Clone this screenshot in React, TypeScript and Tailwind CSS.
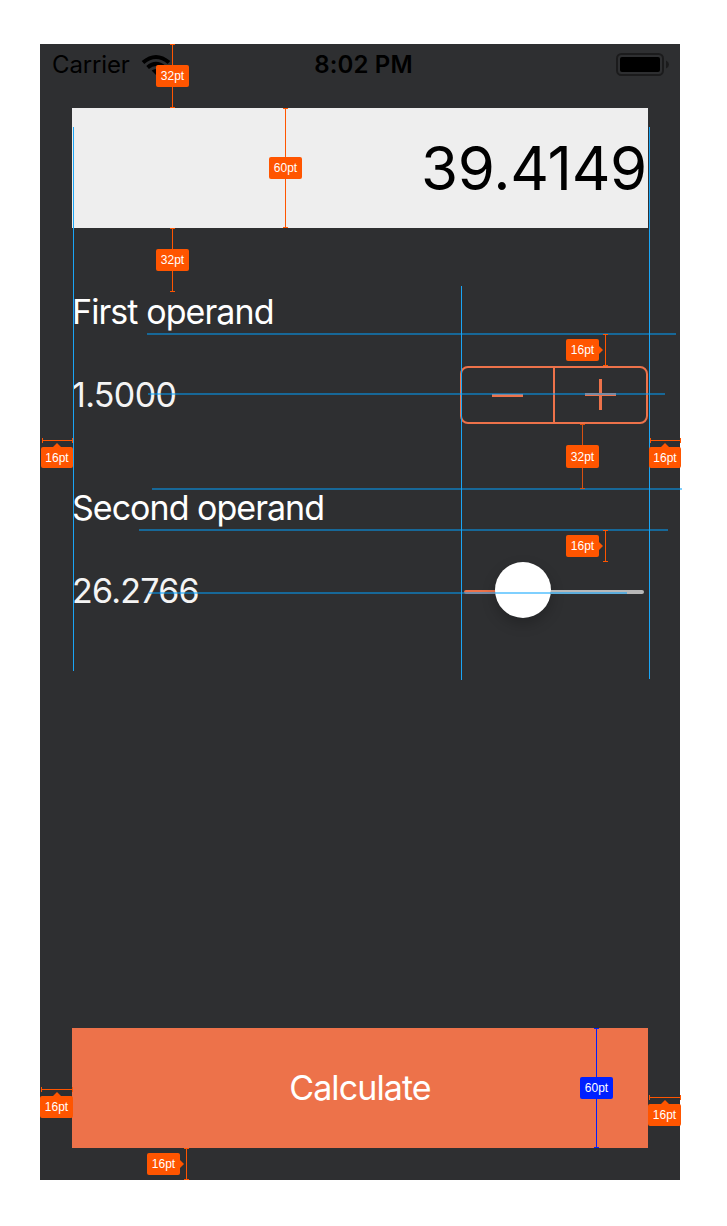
type Arrow = "right" | "up";

function Badge({ text, place, color, arrow }: { text: string; place: string; color: string; arrow?: Arrow }) {
  return (
    <div className={`absolute flex items-center justify-center rounded-[2px] font-['Liberation_Sans',sans-serif] text-[12px] leading-none text-white ${color} ${place}`}>
      {arrow === "right" && (
        <svg className="absolute left-full top-1/2 -translate-y-1/2" width="4" height="8" viewBox="0 0 4 8">
          <path d="M0 0L4 4L0 8Z" fill="#ff5500" />
        </svg>
      )}
      {arrow === "up" && (
        <svg className="absolute bottom-full left-1/2 -translate-x-1/2" width="8" height="4" viewBox="0 0 8 4">
          <path d="M0 4L4 0L8 4Z" fill="#ff5500" />
        </svg>
      )}
      <span>{text}</span>
    </div>
  );
}

function VerticalMeasure({ place, color }: { place: string; color: string }) {
  return (
    <div className={`absolute flex w-[5px] flex-col items-center ${place}`}>
      <div className={`h-px w-full ${color}`} />
      <div className={`w-px flex-1 ${color}`} />
      <div className={`h-px w-full ${color}`} />
    </div>
  );
}

function HorizontalMeasure({ place }: { place: string }) {
  return (
    <div className={`absolute flex h-[5px] items-center ${place}`}>
      <div className="h-full w-px bg-[#ff5500]" />
      <div className="h-px flex-1 bg-[#ff5500]" />
      <div className="h-full w-px bg-[#ff5500]" />
    </div>
  );
}

const guides = [
  "left-[147px] top-[333px] w-[529px]",
  "left-[148px] top-[393px] w-[517px]",
  "left-[152px] top-[488px] w-[530px]",
  "left-[139px] top-[529px] w-[529px]",
  "left-[149px] top-[592px] w-[478px]",
];

const orange = "bg-[#ff5500]";
const blue = "bg-[#0020ff]";

function Annotations() {
  return (
    <div className="pointer-events-none absolute inset-0">
      {guides.map((g) => (
        <div key={g} className={`absolute h-[2px] bg-[#00a2ff]/50 ${g}`} />
      ))}
      <div className="absolute left-[73px] top-[127px] h-[544px] w-px bg-[#1aa5f5]" />
      <div className="absolute left-[461px] top-[286px] h-[394px] w-px bg-[#1aa5f5]" />
      <div className="absolute left-[649px] top-[127px] h-[552px] w-px bg-[#1aa5f5]" />

      <VerticalMeasure place="left-[170px] top-[44px] h-[64px]" color={orange} />
      <VerticalMeasure place="left-[283px] top-[108px] h-[120px]" color={orange} />
      <VerticalMeasure place="left-[170px] top-[228px] h-[64px]" color={orange} />
      <VerticalMeasure place="left-[603px] top-[334px] h-[32px]" color={orange} />
      <VerticalMeasure place="left-[580px] top-[424px] h-[65px]" color="bg-[#d85010]" />
      <VerticalMeasure place="left-[603px] top-[530px] h-[32px]" color={orange} />
      <VerticalMeasure place="left-[184px] top-[1148px] h-[32px]" color={orange} />
      <VerticalMeasure place="left-[594px] top-[1028px] h-[120px]" color={blue} />
      <HorizontalMeasure place="left-[42px] top-[438px] w-[31px]" />
      <HorizontalMeasure place="left-[650px] top-[438px] w-[31px]" />
      <HorizontalMeasure place="left-[41px] top-[1087px] w-[32px]" />
      <HorizontalMeasure place="left-[649px] top-[1095px] w-[32px]" />

      <Badge text="32pt" color={orange} place="left-[156px] top-[65px] h-[22px] w-[33px]" />
      <Badge text="60pt" color={orange} place="left-[269px] top-[157px] h-[22px] w-[33px]" />
      <Badge text="32pt" color={orange} place="left-[156px] top-[249px] h-[22px] w-[33px]" />
      <Badge text="16pt" color={orange} place="left-[566px] top-[339px] h-[22px] w-[33px]" arrow="right" />
      <Badge text="32pt" color={orange} place="left-[566px] top-[445px] h-[23px] w-[33px]" />
      <Badge text="16pt" color={orange} place="left-[566px] top-[535px] h-[22px] w-[33px]" arrow="right" />
      <Badge text="16pt" color={orange} place="left-[41px] top-[447px] h-[21px] w-[32px]" arrow="up" />
      <Badge text="16pt" color={orange} place="left-[649px] top-[447px] h-[21px] w-[32px]" arrow="up" />
      <Badge text="16pt" color={orange} place="left-[40px] top-[1096px] h-[22px] w-[33px]" arrow="up" />
      <Badge text="16pt" color={orange} place="left-[648px] top-[1104px] h-[22px] w-[33px]" arrow="up" />
      <Badge text="16pt" color={orange} place="left-[147px] top-[1153px] h-[22px] w-[33px]" arrow="right" />
      <Badge text="60pt" color={blue} place="left-[580px] top-[1077px] h-[22px] w-[33px]" />
    </div>
  );
}

function StatusBar() {
  return (
    <div className="grid h-[64px] grid-cols-[1fr_auto_1fr] items-start pl-3 pr-[11px] pt-[6px] text-[24px] leading-[30px] text-black">
      <div className="flex items-center gap-[11px]">
        <span className="tracking-[-0.15px]">Carrier</span>
        <svg className="-mt-px" width="30" height="22" viewBox="0 0 30 22" fill="none" stroke="#000" strokeWidth="4">
          <path d="M2 8.6Q15 -2.6 28 8.6" />
          <path d="M6.6 13.4Q15 6.2 23.4 13.4" />
          <path d="M15 21L10.6 16.6Q15 13.2 19.4 16.6Z" fill="#000" stroke="none" />
        </svg>
      </div>
      <span className="ml-[6px] font-semibold tracking-[0.15px]">8:02 PM</span>
      <svg className="mt-[3px] justify-self-end" width="53" height="24" viewBox="0 0 53 24">
        <rect x="1" y="1" width="46" height="21" rx="4.5" fill="none" stroke="#1b1b1c" strokeWidth="2" />
        <rect x="4" y="4" width="40" height="15" rx="2" fill="#000" />
        <path d="M50 7.5Q53 9 53 11.5Q53 14 50 15.5Z" fill="#1b1b1c" />
      </svg>
    </div>
  );
}

function Stepper() {
  return (
    <div className="flex h-[58px] w-[188px] rounded-[8px] border-2 border-[#ed724a]">
      <button className="flex flex-1 items-center justify-center border-r-2 border-[#ed724a]" aria-label="Decrement">
        <svg className="mb-px" width="31" height="31" viewBox="0 0 31 31">
          <path d="M0 16.5H31" stroke="#ed724a" strokeWidth="3" />
        </svg>
      </button>
      <button className="flex flex-1 items-center justify-center" aria-label="Increment">
        <svg className="mb-px" width="31" height="31" viewBox="0 0 31 31">
          <path d="M0 15.5H31M15.5 0V31" stroke="#ed724a" strokeWidth="3" />
        </svg>
      </button>
    </div>
  );
}

function Slider() {
  return (
    <div className="flex h-[56px] w-[188px] items-center px-1">
      <div className="mt-1 h-[4px] w-[50px] rounded-l-full bg-[#ed724a]" />
      <div className="-ml-[19px] h-[56px] w-[56px] shrink-0 rounded-full bg-white shadow-[0_6px_14px_rgba(0,0,0,0.22)]" />
      <div className="mt-1 h-[4px] flex-1 rounded-r-full bg-[#b8b8b8]" />
    </div>
  );
}

export default function App() {
  return (
    <div className="relative h-[1226px] w-[727px] overflow-hidden bg-white pl-[40px] pt-[44px] font-[Inter,sans-serif]">
      <div className="flex h-[1136px] w-[640px] flex-col bg-[#2e2f31]">
        <StatusBar />
        <div className="flex flex-1 flex-col px-8 pb-8 text-[34px] leading-[42px] text-white">
          <div className="flex h-[120px] items-center justify-end bg-[#eeeeee] pr-px text-[60px] text-black">
            <span className="tracking-[-0.3px]">39.4149</span>
          </div>
          <div className="mt-[63px] h-[42px] tracking-[-0.92px]">First operand</div>
          <div className="mt-[33px] flex h-[58px] items-center justify-between">
            <span className="tracking-[-0.65px] text-[#f4f4f4]">1.5000</span>
            <Stepper />
          </div>
          <div className="mt-[63px] h-[42px] tracking-[-0.98px]">Second operand</div>
          <div className="mt-[33px] flex h-[56px] items-center justify-between">
            <span className="pt-[2px] tracking-[-0.75px] text-[#f4f4f4]">26.2766</span>
            <Slider />
          </div>
          <button className="mt-auto h-[120px] bg-[#ed724a] text-white">
            <span className="tracking-[-0.9px]">Calculate</span>
          </button>
        </div>
      </div>
      <Annotations />
    </div>
  );
}
